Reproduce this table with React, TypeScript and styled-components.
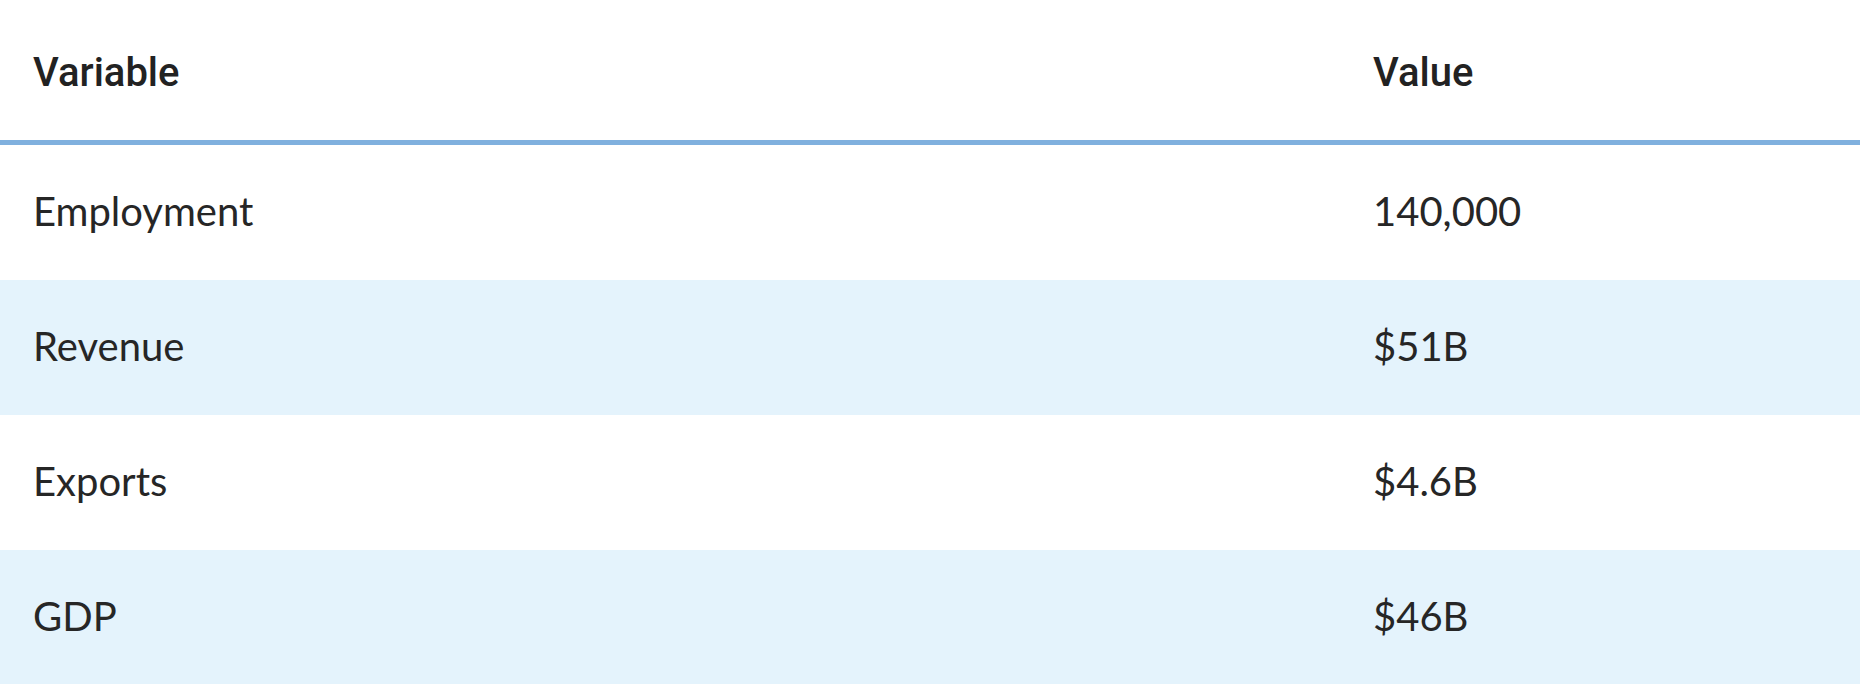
import styled, { createGlobalStyle } from 'styled-components';

const GlobalStyle = createGlobalStyle`
  html, body {
    margin: 0;
    padding: 0;
    background: #fff;
  }
`;

const Table = styled.div`
  width: 1860px;
  display: flex;
  flex-direction: column;
  color: #222;
`;

const HeaderRow = styled.div`
  display: grid;
  grid-template-columns: 1340px 1fr;
  height: 140px;
  align-items: center;
  border-bottom: 5px solid #80b0de;
  box-sizing: content-box;
`;

const HeaderCell = styled.div`
  padding: 6px 0 0 33px;
  font-family: Roboto, "Liberation Sans", sans-serif;
  font-weight: 500;
  font-size: 40px;
  line-height: 1;
`;

const Row = styled.div<{ $striped: boolean }>`
  display: grid;
  grid-template-columns: 1340px 1fr;
  height: 135px;
  align-items: center;
  background: ${(p) => (p.$striped ? '#e4f3fc' : '#fff')};
`;

const Cell = styled.div`
  padding: 0 0 4px 33px;
  font-family: Lato, "Open Sans", sans-serif;
  font-weight: 400;
  font-size: 40px;
  line-height: 1;
  color: #262626;
`;

const rows = [
  { name: 'Employment', value: '140,000' },
  { name: 'Revenue', value: '$51B' },
  { name: 'Exports', value: '$4.6B' },
  { name: 'GDP', value: '$46B' },
];

export default function App() {
  return (
    <>
      <GlobalStyle />
      <Table>
        <HeaderRow>
          <HeaderCell>Variable</HeaderCell>
          <HeaderCell>Value</HeaderCell>
        </HeaderRow>
        {rows.map((r, i) => (
          <Row key={r.name} $striped={i % 2 === 1}>
            <Cell>{r.name}</Cell>
            <Cell>{r.value}</Cell>
          </Row>
        ))}
      </Table>
    </>
  );
}
